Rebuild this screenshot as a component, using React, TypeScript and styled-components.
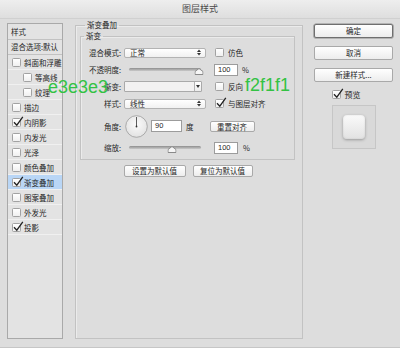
import React from "react";
import styled, { createGlobalStyle } from "styled-components";

const GlobalStyle = createGlobalStyle`
  html, body {
    margin: 0;
    padding: 0;
    background: #dddddd;
  }
  body {
    font-family: "Noto Sans CJK SC", "Noto Sans", sans-serif;
    color: #262626;
  }
`;

const Window = styled.div`
  position: relative;
  width: 400px;
  height: 348px;
  box-sizing: border-box;
  background: #dddddd;
  border-bottom: 1px solid #c6c6c6;
  overflow: hidden;
  font-size: 7.5px;
`;

const TitleBar = styled.div`
  height: 18px;
  line-height: 18px;
  text-align: center;
  font-size: 9px;
  color: #4a4a4a;
  background: linear-gradient(#eeeeee, #dedede);
  border-bottom: 1px solid #d0d0d0;
`;

const Body = styled.div`
  display: flex;
  align-items: flex-start;
  padding: 1px 7px 0 7px;
`;

/* ---------- left list ---------- */

const Sidebar = styled.div`
  width: 57px;
  height: 316px;
  margin-top: 3px;
  box-sizing: border-box;
  border: 1px solid #a9a9a9;
  background: #e3e3e3;
`;

const SideHeader = styled.div<{ $h: number }>`
  height: ${({ $h }) => $h}px;
  line-height: ${({ $h }) => $h}px;
  padding-left: 3px;
  border-bottom: 1px solid #c2c2c2;
`;

const SideItem = styled.div<{ $indent?: boolean; $active?: boolean }>`
  display: flex;
  align-items: center;
  gap: 3px;
  height: 14px;
  padding-left: ${({ $indent }) => ($indent ? 15 : 4)}px;
  border-bottom: 1px solid #f0f0f0;
  background: ${({ $active }) => ($active ? "#b9d6f6" : "transparent")};
`;

const Box = styled.span`
  position: relative;
  flex: none;
  width: 9px;
  height: 9px;
  box-sizing: border-box;
  border: 1px solid #a2a2a2;
  border-radius: 1.5px;
  background: linear-gradient(#ffffff, #f0f0f0);
`;

const CheckMark = styled.svg`
  position: absolute;
  left: 0;
  top: -3px;
`;

const Check = ({ on }: { on?: boolean }) => (
  <Box>
    {on && (
      <CheckMark width="11" height="11" viewBox="0 0 11 11">
        <path d="M1 6.2 L3.8 9.2 L9.8 0.8" fill="none" stroke="#222" strokeWidth="1.3" />
      </CheckMark>
    )}
  </Box>
);

const sideItems = [
  { name: "斜面和浮雕" },
  { name: "等高线", indent: true },
  { name: "纹理", indent: true },
  { name: "描边" },
  { name: "内阴影", on: true },
  { name: "内发光" },
  { name: "光泽" },
  { name: "颜色叠加" },
  { name: "渐变叠加", on: true, active: true },
  { name: "图案叠加" },
  { name: "外发光" },
  { name: "投影", on: true },
];

/* ---------- main groups ---------- */

const Main = styled.div`
  margin-left: 12px;
`;

const Group = styled.fieldset<{ $w: number; $h: number }>`
  margin: 0;
  width: ${({ $w }) => $w}px;
  height: ${({ $h }) => $h}px;
  box-sizing: border-box;
  border: 1px solid #c2c2c2;
  box-shadow: inset 1px 1px 0 #ebebeb;
  padding: 0 6px 0 4px;
  min-width: 0;
`;

const InnerGroup = styled(Group)`
  margin-top: 1px;
  padding: 3px 0 0 0;
`;

const Legend = styled.legend<{ $ml: number }>`
  font-size: 7.5px;
  line-height: 10px;
  padding: 0 2px;
  margin-left: ${({ $ml }) => $ml}px;
`;

const Row = styled.div<{ $h: number }>`
  display: flex;
  align-items: center;
  height: ${({ $h }) => $h}px;
`;

const Label = styled.span`
  width: 40px;
  flex: none;
  text-align: right;
  margin-right: 3px;
`;

const Select = styled.div<{ $w: number }>`
  display: flex;
  align-items: center;
  justify-content: space-between;
  width: ${({ $w }) => $w}px;
  height: 10px;
  box-sizing: border-box;
  padding: 0 4px 0 5px;
  border: 1px solid #b3b3b3;
  border-radius: 2px;
  background: linear-gradient(#ffffff, #f1f1f1);
`;

const Arrows = () => (
  <svg width="4" height="7" viewBox="0 0 4 7">
    <polygon points="0,3 2,0.5 4,3" fill="#333" />
    <polygon points="0,4 2,6.5 4,4" fill="#333" />
  </svg>
);

const Option = styled.span<{ $ml: number }>`
  display: flex;
  align-items: center;
  gap: 4px;
  margin-left: ${({ $ml }) => $ml}px;
`;

const Track = styled.div`
  position: relative;
  width: 72px;
  height: 3px;
  margin-left: 5px;
  border-radius: 1.5px;
  background: linear-gradient(#8e8e8e, #c9c9c9);
`;

const Thumb = styled.svg`
  position: absolute;
  top: 0px;
  transform: translateX(-50%);
`;

const Slider = ({ pos }: { pos: number }) => (
  <Track>
    <Thumb width="9" height="7" viewBox="0 0 9 7" style={{ left: `${pos}%` }}>
      <path d="M0.5 6.5 L0.5 3.5 L4.5 0.5 L8.5 3.5 L8.5 6.5 Z" fill="#f6f6f6" stroke="#8a8a8a" />
    </Thumb>
  </Track>
);

const Input = styled.div<{ $w: number; $ml: number }>`
  width: ${({ $w }) => $w}px;
  height: 12px;
  line-height: 10px;
  margin-left: ${({ $ml }) => $ml}px;
  box-sizing: border-box;
  padding-left: 3px;
  border: 1px solid #9c9c9c;
  background: #ffffff;
  font-family: "Liberation Sans", Arial, sans-serif;
  font-size: 7.5px;
`;

const Unit = styled.span<{ $ml: number }>`
  margin-left: ${({ $ml }) => $ml}px;
`;

const GradientPick = styled.div`
  display: flex;
  width: 78px;
  height: 11px;
  box-sizing: border-box;
  border: 1px solid #a9a9a9;
  border-radius: 1px;
`;

const Swatch = styled.div`
  flex: 1;
  background: #f2f1f1;
  border-right: 1px solid #b3b3b3;
`;

const Drop = styled.div`
  width: 6px;
  display: flex;
  align-items: center;
  justify-content: center;
  background: linear-gradient(#ffffff, #ececec);
`;

const Dial = () => (
  <svg width="23" height="23" viewBox="0 0 23 23" style={{ marginLeft: 1, flex: "none" }}>
    <defs>
      <radialGradient id="dialFill" cx="50%" cy="40%" r="60%">
        <stop offset="0%" stopColor="#fbfbfb" />
        <stop offset="100%" stopColor="#e2e2e2" />
      </radialGradient>
    </defs>
    <circle cx="11.5" cy="11.5" r="10.8" fill="url(#dialFill)" stroke="#9a9a9a" strokeWidth="0.8" />
    <line x1="11.5" y1="11.5" x2="11.5" y2="2" stroke="#333" strokeWidth="0.8" />
    <circle cx="11.5" cy="11.5" r="0.9" fill="#333" />
  </svg>
);

const Button = styled.div<{ $w: number; $h?: number; $default?: boolean }>`
  width: ${({ $w }) => $w}px;
  height: ${({ $h }) => $h ?? 12}px;
  line-height: ${({ $h }) => ($h ?? 12) - 2}px;
  box-sizing: border-box;
  text-align: center;
  border: 1px solid ${({ $default }) => ($default ? "#6f6f6f" : "#a9a9a9")};
  border-radius: 2px;
  background: linear-gradient(#ffffff, #ededed);
  box-shadow: ${({ $default }) => ($default ? "0 0 0 0.6px #8a8a8a" : "none")};
  font-size: 7.5px;
`;

const ButtonRow = styled.div`
  display: flex;
  justify-content: center;
  gap: 7px;
  margin-top: 5px;
`;

/* ---------- right column ---------- */

const RightCol = styled.div`
  width: 79px;
  margin-left: 11px;
  padding-top: 4px;
  display: flex;
  flex-direction: column;
  align-items: center;
  gap: 8px;
`;

const PreviewWrap = styled.div`
  width: 44px;
  display: flex;
  flex-direction: column;
  gap: 6px;
`;

const PreviewCheck = styled.div`
  display: flex;
  align-items: center;
  gap: 4px;
  height: 9px;
  font-size: 8px;
`;

const PreviewBox = styled.div`
  width: 44px;
  height: 44px;
  box-sizing: border-box;
  border: 1px solid #c6c6c6;
  background: #d9d9d9;
  display: flex;
  align-items: center;
  justify-content: center;
`;

const PreviewChip = styled.div`
  width: 22px;
  height: 24px;
  border-radius: 4px;
  background: linear-gradient(#fafafa, #e2e2e2);
  box-shadow: 0 1px 3px rgba(0, 0, 0, 0.3), inset 0 0 2px rgba(0, 0, 0, 0.12);
`;

/* ---------- annotations ---------- */

const Note = styled.span<{ $x: number; $y: number }>`
  position: absolute;
  left: ${({ $x }) => $x}px;
  top: ${({ $y }) => $y}px;
  font-family: "Liberation Sans", Arial, sans-serif;
  font-size: 18px;
  line-height: 18px;
  color: #33c244;
`;

const App = () => {
  return (
    <Window>
      <GlobalStyle />
      <TitleBar>图层样式</TitleBar>
      <Body>
        <Sidebar>
          <SideHeader $h={15}>样式</SideHeader>
          <SideHeader $h={14}>混合选项:默认</SideHeader>
          {sideItems.map((item) => (
            <SideItem key={item.name} $indent={item.indent} $active={item.active}>
              <Check on={item.on} />
              <span>{item.name}</span>
            </SideItem>
          ))}
        </Sidebar>

        <Main>
          <Group $w={228} $h={319}>
            <Legend $ml={5}>渐变叠加</Legend>
            <InnerGroup $w={215} $h={129}>
              <Legend $ml={3}>渐变</Legend>
              <Row $h={17}>
                <Label>混合模式:</Label>
                <Select $w={82}>
                  <span>正常</span>
                  <Arrows />
                </Select>
                <Option $ml={9}>
                  <Check />
                  仿色
                </Option>
              </Row>
              <Row $h={17}>
                <Label>不透明度:</Label>
                <Slider pos={97} />
                <Input $w={24} $ml={13}>100</Input>
                <Unit $ml={4}>%</Unit>
              </Row>
              <Row $h={17}>
                <Label>渐变:</Label>
                <GradientPick>
                  <Swatch />
                  <Drop>
                    <svg width="4" height="3" viewBox="0 0 4 3">
                      <polygon points="0,0 4,0 2,3" fill="#333" />
                    </svg>
                  </Drop>
                </GradientPick>
                <Option $ml={13}>
                  <Check />
                  反向
                </Option>
              </Row>
              <Row $h={17}>
                <Label>样式:</Label>
                <Select $w={82}>
                  <span>线性</span>
                  <Arrows />
                </Select>
                <Option $ml={9}>
                  <Check on />
                  与图层对齐
                </Option>
              </Row>
              <Row $h={28}>
                <Label>角度:</Label>
                <Dial />
                <Input $w={31} $ml={3}>90</Input>
                <Unit $ml={4}>度</Unit>
                <Button $w={45} $h={11} style={{ marginLeft: 16 }}>
                  重置对齐
                </Button>
              </Row>
              <Row $h={15}>
                <Label>缩放:</Label>
                <Slider pos={60} />
                <Input $w={24} $ml={13}>100</Input>
                <Unit $ml={5}>%</Unit>
              </Row>
            </InnerGroup>
            <ButtonRow>
              <Button $w={62}>设置为默认值</Button>
              <Button $w={60}>复位为默认值</Button>
            </ButtonRow>
          </Group>
        </Main>

        <RightCol>
          <Button $w={79} $h={14} $default>
            确定
          </Button>
          <Button $w={79} $h={14}>
            取消
          </Button>
          <Button $w={79} $h={14}>
            新建样式...
          </Button>
          <PreviewWrap>
            <PreviewCheck>
              <Check on />
              预览
            </PreviewCheck>
            <PreviewBox>
              <PreviewChip />
            </PreviewBox>
          </PreviewWrap>
        </RightCol>
      </Body>

      <Note $x={48} $y={78}>e3e3e3</Note>
      <Note $x={245} $y={76}>f2f1f1</Note>
    </Window>
  );
};

export default App;
